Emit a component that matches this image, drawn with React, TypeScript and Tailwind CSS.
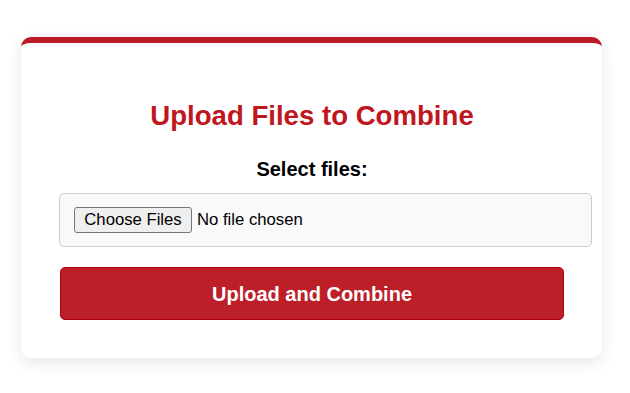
export default function App() {
  return (
    <div className="min-h-[393px] w-[630px] bg-white pt-[37px] font-['Liberation_Sans',Arial,sans-serif]">
      <div className="ml-[21px] w-[581px] rounded-[10px] border-t-[6px] border-[#bc1a24] bg-white pt-[57px] pb-[38px] pl-[39px] shadow-[0_4px_16px_rgba(0,0,0,0.1)]">
        <h2 className="w-[504px] text-center text-[27.6px] leading-[32px] font-bold text-[#bf1620]">
          Upload Files to Combine
        </h2>
        <p className="mt-[25px] w-[504px] text-center text-[20px] leading-[24px] font-bold text-black">
          Select files:
        </p>
        <div className="mt-[12px] -ml-[1px] flex h-[54px] w-[533px] items-center rounded-[5px] border border-[#cccccc] bg-[#f9f9f9] pl-[14px]">
          <button
            type="button"
            className="h-[26px] w-[118px] rounded-[3px] border border-[#767676] bg-[#efefef] text-[16.7px] leading-none text-black"
          >
            Choose Files
          </button>
          <span className="ml-[5px] text-[16.7px] text-black">No file chosen</span>
        </div>
        <button
          type="button"
          className="mt-[20px] h-[53px] w-[504px] rounded-[5px] border border-[#b0000c] bg-[#bd1f28] text-[20px] font-bold text-white"
        >
          Upload and Combine
        </button>
      </div>
    </div>
  );
}
